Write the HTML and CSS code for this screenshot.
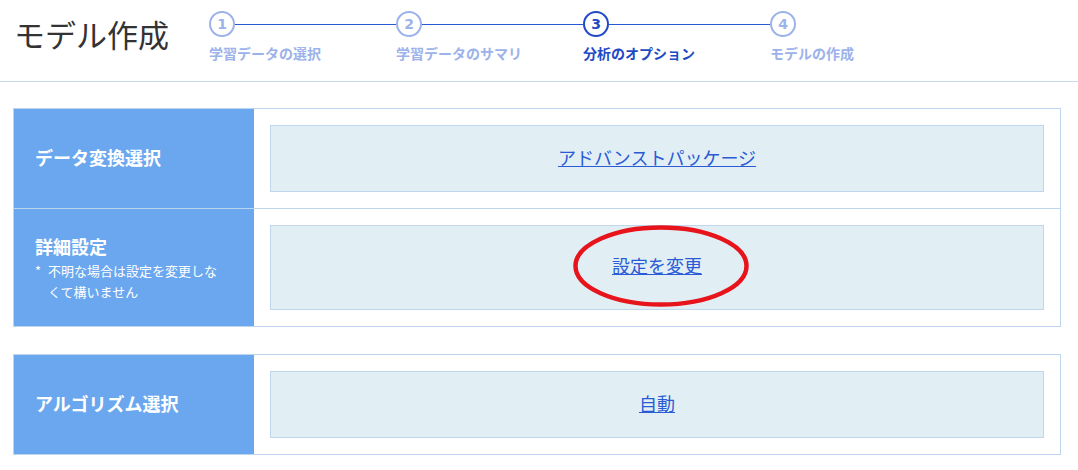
FILE: index.html
```html
<!DOCTYPE html>
<html lang="ja">

<head>
    <meta charset="UTF-8">
    <meta name="viewport" content="width=device-width, initial-scale=1.0">
    <title>モデル作成</title>
    <link rel="stylesheet" href="styles.css">
</head>

<body>
    <header class="page-header">
        <h1 class="page-title">モデル作成</h1>

        <!-- ステップ表示 -->
        <ol class="steps">
            <li class="step">
                <div class="step-head"><span class="step-num">1</span><span class="step-line"></span></div>
                <span class="step-label">学習データの選択</span>
            </li>
            <li class="step">
                <div class="step-head"><span class="step-num">2</span><span class="step-line"></span></div>
                <span class="step-label">学習データのサマリ</span>
            </li>
            <li class="step current">
                <div class="step-head"><span class="step-num">3</span><span class="step-line"></span></div>
                <span class="step-label">分析のオプション</span>
            </li>
            <li class="step last">
                <div class="step-head"><span class="step-num">4</span></div>
                <span class="step-label">モデルの作成</span>
            </li>
        </ol>
    </header>

    <main class="content">
        <div class="opt-table">
            <div class="opt-row">
                <div class="opt-name">
                    <div class="opt-title">データ変換選択</div>
                </div>
                <div class="opt-value">
                    <div class="opt-box"><a class="opt-link" href="#">アドバンストパッケージ</a></div>
                </div>
            </div>
            <div class="opt-row">
                <div class="opt-name with-note">
                    <div class="opt-title">詳細設定</div>
                    <div class="opt-note"><span class="note-mark">*</span><span>不明な場合は設定を変更しなくて構いません</span></div>
                </div>
                <div class="opt-value">
                    <div class="opt-box">
                        <span class="marked">
                            <a class="opt-link" href="#">設定を変更</a>
                            <!-- 赤丸の注釈 -->
                            <svg class="ring" width="176" height="82" viewBox="0 0 176 82">
                                <ellipse cx="88" cy="41" rx="85.5" ry="38.5" fill="none" stroke="#e8141c" stroke-width="4.5" />
                            </svg>
                        </span>
                    </div>
                </div>
            </div>
        </div>

        <div class="opt-table">
            <div class="opt-row">
                <div class="opt-name">
                    <div class="opt-title">アルゴリズム選択</div>
                </div>
                <div class="opt-value">
                    <div class="opt-box"><a class="opt-link" href="#">自動</a></div>
                </div>
            </div>
        </div>
    </main>
</body>

</html>
```

FILE: styles.css
```css
body {
    margin: 0;
    font-family: "Noto Sans CJK JP", "Noto Sans", sans-serif;
    color: #333;
    background: #fff;
}

.page-header {
    display: flex;
    align-items: flex-start;
    height: 81px;
    border-bottom: 1px solid #c9daee;
}

.page-title {
    margin: 0;
    width: 195px;
    padding: 14px 0 0 14px;
    font-size: 31px;
    font-weight: 400;
    line-height: 40px;
    color: #333;
}

.steps {
    list-style: none;
    margin: 0;
    padding: 11px 0 0;
    display: flex;
}

.step {
    width: 187px;
}

.step.last {
    width: auto;
}

.step-head {
    display: flex;
    align-items: center;
}

.step-num {
    box-sizing: border-box;
    width: 26px;
    height: 26px;
    border: 2px solid #9cb2ea;
    border-radius: 50%;
    color: #9cb2ea;
    font-family: "DejaVu Sans", sans-serif;
    font-size: 14px;
    font-weight: bold;
    line-height: 1;
    display: flex;
    align-items: center;
    justify-content: center;
}

.step-line {
    flex: 1;
    height: 1px;
    background: #2758d6;
}

.step-label {
    display: block;
    margin-top: 6px;
    font-size: 14px;
    font-weight: bold;
    line-height: 20px;
    color: #9cb2ea;
    white-space: nowrap;
}

.step.current .step-num {
    border-color: #2249c4;
    color: #2249c4;
}

.step.current .step-label {
    color: #2249c4;
}

.content {
    padding: 26px 17px 0 13px;
}

.opt-table {
    border: 1px solid #bed5f0;
    margin-bottom: 27px;
}

.opt-row {
    display: flex;
}

.opt-row+.opt-row {
    border-top: 1px solid #bed5f0;
}

.opt-name {
    box-sizing: border-box;
    width: 240px;
    flex: none;
    padding: 0 30px 4px 21px;
    background: #6ba7ee;
    color: #fff;
    display: flex;
    flex-direction: column;
    justify-content: center;
}

.opt-name.with-note {
    justify-content: flex-start;
    padding-top: 25px;
    padding-bottom: 24px;
}

.opt-title {
    font-size: 18px;
    font-weight: bold;
    line-height: 24px;
}

.opt-note {
    display: flex;
    margin-top: 2px;
    font-size: 13px;
    line-height: 21px;
}

.note-mark {
    flex: none;
    width: 13px;
}

.opt-value {
    flex: 1;
    display: flex;
    padding: 16px;
}

.opt-box {
    box-sizing: border-box;
    flex: 1;
    min-height: 67px;
    padding-bottom: 4px;
    border: 1px solid #c1d6ec;
    background: #e1eff5;
    display: flex;
    align-items: center;
    justify-content: center;
}

.opt-link {
    color: #2a5ad6;
    font-size: 18px;
    line-height: 24px;
    text-decoration: underline;
}

.marked {
    position: relative;
    display: inline-block;
}

.ring {
    position: absolute;
    left: 50%;
    top: 50%;
    margin-left: -84px;
    margin-top: -41px;
    pointer-events: none;
}
```
